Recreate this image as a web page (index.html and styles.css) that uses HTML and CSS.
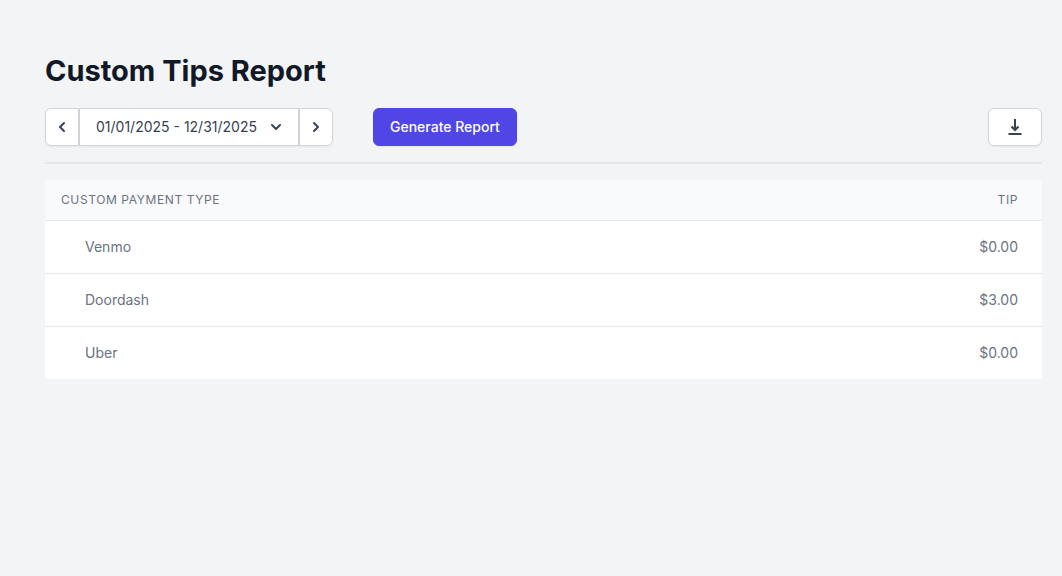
FILE: index.html
```html
<!DOCTYPE html>
<html lang="en">
<head>
<meta charset="utf-8">
<meta name="viewport" content="width=device-width, initial-scale=1">
<title>Custom Tips Report</title>
<link rel="stylesheet" href="styles.css">
</head>
<body>
<main class="page">
  <h1 class="title">Custom Tips Report</h1>
  <div class="toolbar">
    <div class="date-group" role="group" aria-label="Report period">
      <button class="button step step-prev" type="button" aria-label="Previous period">
        <svg class="icon" viewBox="0 0 20 20" aria-hidden="true"><path fill="currentColor" fill-rule="evenodd" d="M12.707 5.293a1 1 0 010 1.414L9.414 10l3.293 3.293a1 1 0 01-1.414 1.414l-4-4a1 1 0 010-1.414l4-4a1 1 0 011.414 0z" clip-rule="evenodd"/></svg>
      </button>
      <button class="button range" type="button" aria-haspopup="true">
        <span>01/01/2025 - 12/31/2025</span>
        <svg class="icon" viewBox="0 0 20 20" aria-hidden="true"><path fill="currentColor" fill-rule="evenodd" d="M5.293 7.293a1 1 0 011.414 0L10 10.586l3.293-3.293a1 1 0 111.414 1.414l-4 4a1 1 0 01-1.414 0l-4-4a1 1 0 010-1.414z" clip-rule="evenodd"/></svg>
      </button>
      <button class="button step step-next" type="button" aria-label="Next period">
        <svg class="icon" viewBox="0 0 20 20" aria-hidden="true"><path fill="currentColor" fill-rule="evenodd" d="M7.293 14.707a1 1 0 010-1.414L10.586 10 7.293 6.707a1 1 0 011.414-1.414l4 4a1 1 0 010 1.414l-4 4a1 1 0 01-1.414 0z" clip-rule="evenodd"/></svg>
      </button>
    </div>
    <button class="button generate" type="button">Generate Report</button>
    <button class="button download" type="button" aria-label="Download report">
      <svg class="icon" viewBox="0 0 20 20" aria-hidden="true"><path fill="none" stroke="currentColor" stroke-width="2" d="M10 2v11M6.500 9.500L10 13l3.500-3.500M3.500 17h13"/></svg>
    </button>
  </div>
  <table class="report">
    <thead>
      <tr><th scope="col">Custom Payment Type</th><th class="amount" scope="col">Tip</th></tr>
    </thead>
    <tbody>
      <tr><td>Venmo</td><td class="amount">$0.00</td></tr>
      <tr><td>Doordash</td><td class="amount">$3.00</td></tr>
      <tr><td>Uber</td><td class="amount">$0.00</td></tr>
    </tbody>
  </table>
</main>
</body>
</html>
```
FILE: styles.css
```css
* { box-sizing: border-box; }
body {
  margin: 0;
  background: #f3f4f6;
  color: #111827;
  font-family: Inter, "Liberation Sans", sans-serif;
  font-size: 14px;
  line-height: 20px;
}
.page { padding: 52px 20px 24px 45px; }
.title {
  margin: 0;
  font-size: 29px;
  line-height: 38px;
  font-weight: 700;
}
.toolbar {
  display: flex;
  align-items: center;
  margin-top: 18px;
  padding-bottom: 16px;
  border-bottom: 2px solid #e5e7eb;
}
.date-group { display: flex; }
.button {
  display: flex;
  align-items: center;
  justify-content: center;
  height: 38px;
  padding: 0 16px;
  border: 1px solid #d1d5db;
  border-radius: 6px;
  background: #fff;
  color: #374151;
  font: inherit;
  font-weight: 500;
  white-space: nowrap;
  box-shadow: 0 1px 2px rgb(0 0 0 / 5%);
}
.icon { width: 20px; height: 20px; flex: none; }
.step { width: 34px; padding: 0; }
.step-prev { border-radius: 6px 0 0 6px; }
.step-next { border-radius: 0 6px 6px 0; }
.range {
  width: 220px;
  justify-content: space-between;
  padding: 0 12px 0 16px;
  border-radius: 0;
  font-weight: 400;
}
.generate {
  margin-left: 40px;
  border-color: #4f46e5;
  background: #4f46e5;
  color: #fff;
}
.download { width: 54px; margin-left: auto; }
.report {
  width: 100%;
  margin-top: 16px;
  border-collapse: collapse;
  background: #fff;
  color: #6b7280;
}
.report th {
  padding: 12px 16px;
  background: #f9fafb;
  font-size: 12px;
  line-height: 16px;
  font-weight: 400;
  letter-spacing: 0.05em;
  text-align: left;
  text-transform: uppercase;
}
.report td { padding: 16px 24px 16px 40px; }
.report tbody tr { border-top: 1px solid #e5e7eb; }
.report .amount { padding-right: 24px; text-align: right; }
```
